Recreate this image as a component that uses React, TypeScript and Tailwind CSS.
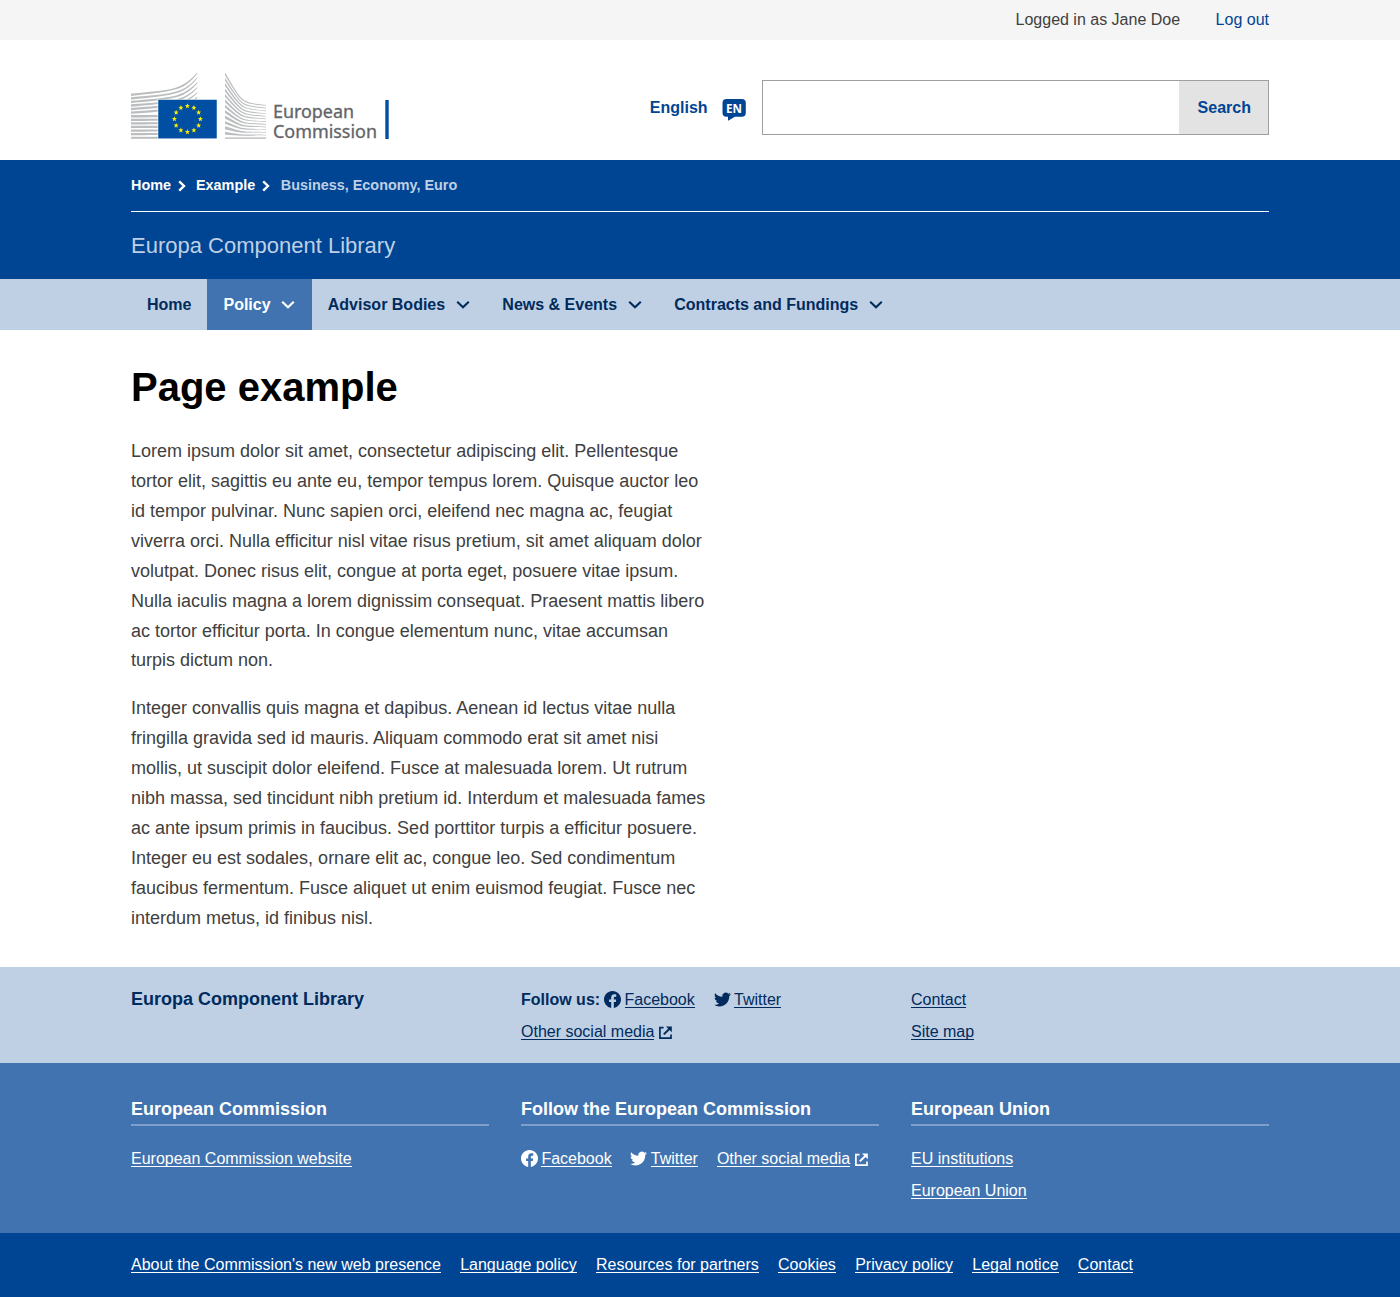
import React from "react";

const paragraphs = [
  [
    "Lorem ipsum dolor sit amet, consectetur adipiscing elit. Pellentesque",
    "tortor elit, sagittis eu ante eu, tempor tempus lorem. Quisque auctor leo",
    "id tempor pulvinar. Nunc sapien orci, eleifend nec magna ac, feugiat",
    "viverra orci. Nulla efficitur nisl vitae risus pretium, sit amet aliquam dolor",
    "volutpat. Donec risus elit, congue at porta eget, posuere vitae ipsum.",
    "Nulla iaculis magna a lorem dignissim consequat. Praesent mattis libero",
    "ac tortor efficitur porta. In congue elementum nunc, vitae accumsan",
    "turpis dictum non.",
  ],
  [
    "Integer convallis quis magna et dapibus. Aenean id lectus vitae nulla",
    "fringilla gravida sed id mauris. Aliquam commodo erat sit amet nisi",
    "mollis, ut suscipit dolor eleifend. Fusce at malesuada lorem. Ut rutrum",
    "nibh massa, sed tincidunt nibh pretium id. Interdum et malesuada fames",
    "ac ante ipsum primis in faucibus. Sed porttitor turpis a efficitur posuere.",
    "Integer eu est sodales, ornare elit ac, congue leo. Sed condimentum",
    "faucibus fermentum. Fusce aliquet ut enim euismod feugiat. Fusce nec",
    "interdum metus, id finibus nisl.",
  ],
];

const starPoints = (cx: number, cy: number, r: number) =>
  Array.from({ length: 10 }, (_, k) => {
    const radius = k % 2 ? r * 0.42 : r;
    const a = (Math.PI / 5) * k - Math.PI / 2;
    return `${(cx + radius * Math.cos(a)).toFixed(2)},${(cy + radius * Math.sin(a)).toFixed(2)}`;
  }).join(" ");

// Tapered strips: thick on the left edge, thin on the right edge.
const leftStrip = (i: number) => {
  const l = 21.6 + i * 3.58;
  const r = i < 6 ? 0.3 + i * 4.9 : l;
  const d = r - l;
  const t = 2.3;
  return `M0 ${l}C22 ${l + d * 0.1} 36 ${l + d * 0.14} 46 ${l + d * 0.3}S62 ${l + d * 0.76} 66.3 ${r}V${r + 1.1}C62 ${l + d * 0.76 + 1.6} 56 ${l + d * 0.46 + 2.2} 46 ${l + d * 0.3 + 1.9}S22 ${l + d * 0.1 + t} 0 ${l + t}Z`;
};

const rightStrip = (i: number) => {
  const l = 0.3 + i * 5.4;
  const r = 33 + i * 2.72;
  const d = r - l;
  return `M94 ${l}C101 ${l + d * 0.36} 108 ${l + d * 0.78} 114 ${l + d * 0.87}S128 ${r - 0.8} 135 ${r}V${r + 0.7}C128 ${r} 120 ${l + d * 0.96 + 1} 114 ${l + d * 0.87 + 1.2}C108 ${l + d * 0.78 + 1.7} 101 ${l + d * 0.36 + 2.6} 94 ${l + 2.9}Z`;
};

function Logo() {
  const rows = Array.from({ length: 12 }, (_, i) => i);
  return (
    <svg width="260" height="70" viewBox="0 0 260 70" className="block shrink-0" aria-label="European Commission">
      <g fill="#bbbdbf">
        {rows.map((i) => (
          <path key={i} d={leftStrip(i)} />
        ))}
        {rows.map((i) => (
          <path key={i} d={rightStrip(i)} />
        ))}
        <rect x="0" y="64.8" width="66.3" height="2" />
        <rect x="94" y="65.4" width="41" height="1.4" />
      </g>
      <rect x="27" y="27.5" width="59" height="39.3" fill="#004fa3" stroke="#fff" strokeWidth="0.5" />
      <g fill="#ffed00">
        {Array.from({ length: 12 }, (_, i) => {
          const a = (Math.PI / 6) * i;
          return <polygon key={i} points={starPoints(56.4 + 13 * Math.sin(a), 47 - 13 * Math.cos(a), 2.7)} />;
        })}
      </g>
      <g fill="#646569" stroke="#646569" strokeWidth="0.35" fontFamily='"Noto Sans", "Open Sans", sans-serif' fontSize="18.4">
        <text x="142" y="46.3" textLength="81" lengthAdjust="spacingAndGlyphs">European</text>
        <text x="142" y="66.3" textLength="104" lengthAdjust="spacingAndGlyphs">Commission</text>
      </g>
      <rect x="254.3" y="28" width="3.4" height="39" fill="#004fa3" />
    </svg>
  );
}

function ChevronDown() {
  return (
    <svg width="14" height="9" viewBox="0 0 14 9" fill="none" stroke="currentColor" strokeWidth="2.1" className="mr-[0.6px] ml-[10.6px]">
      <path d="M1.2 1.7L7 7.2L12.8 1.7" />
    </svg>
  );
}

function ChevronRight() {
  return (
    <svg width="8" height="12" viewBox="0 0 8 12" fill="none" stroke="currentColor" strokeWidth="2.4" className="mr-[9px] ml-[7px]">
      <path d="M1.2 1.3L6 6L1.2 10.7" />
    </svg>
  );
}

function FacebookIcon() {
  return (
    <svg width="17" height="17" viewBox="0 0 24 24" fill="currentColor" className="mr-[3.4px] shrink-0">
      <path d="M24 12.073c0-6.627-5.373-12-12-12s-12 5.373-12 12c0 5.99 4.388 10.954 10.125 11.854v-8.385H7.078v-3.47h3.047V9.43c0-3.007 1.792-4.669 4.533-4.669 1.312 0 2.686.235 2.686.235v2.953H15.83c-1.491 0-1.956.925-1.956 1.874v2.25h3.328l-.532 3.47h-2.796v8.385C19.612 23.027 24 18.062 24 12.073z" />
    </svg>
  );
}

function TwitterIcon() {
  return (
    <svg width="17" height="17" viewBox="0 0 24 24" fill="currentColor" className="mt-px mr-[3.5px] shrink-0">
      <path d="M23.953 4.57a10 10 0 01-2.825.775 4.958 4.958 0 002.163-2.723c-.951.555-2.005.959-3.127 1.184a4.92 4.92 0 00-8.384 4.482C7.69 8.095 4.067 6.13 1.64 3.162a4.822 4.822 0 00-.666 2.475c0 1.71.87 3.213 2.188 4.096a4.904 4.904 0 01-2.228-.616v.06a4.923 4.923 0 003.946 4.827 4.996 4.996 0 01-2.212.085 4.936 4.936 0 004.604 3.417 9.867 9.867 0 01-6.102 2.105c-.39 0-.779-.023-1.17-.067a13.995 13.995 0 007.557 2.209c9.053 0 13.998-7.496 13.998-13.985 0-.21 0-.42-.015-.63A9.935 9.935 0 0024 4.59z" />
    </svg>
  );
}

function ExternalIcon() {
  return (
    <svg width="13" height="13" viewBox="0 0 13 13" fill="none" stroke="currentColor" className="mt-[3px] ml-[5px] shrink-0">
      <path d="M4.6 1.6H0.9V12.1H12V8.6" strokeWidth="1.7" />
      <path d="M4.8 8.4L10.5 2.7" strokeWidth="2" />
      <path d="M7 0.5H12.8V6.3Z" fill="currentColor" stroke="none" />
    </svg>
  );
}

function Link({ children }: { children: React.ReactNode }) {
  return (
    <a href="#" className="h-[18px] border-b border-current leading-[20px] whitespace-nowrap">
      {children}
    </a>
  );
}

const wrap = "mx-auto w-[1138px]";

export default function App() {
  return (
    <div className="h-[1297px] w-[1400px] overflow-hidden bg-white text-base text-[#404040] [font-family:'Liberation_Sans',Arial,sans-serif]">
      <div className="h-10 bg-[#f5f5f5]">
        <div className={`${wrap} flex justify-end gap-[35.5px] leading-10`}>
          <span>Logged in as Jane Doe</span>
          <a href="#" className="text-[#004494]">Log out</a>
        </div>
      </div>

      <header className={`${wrap} flex h-[120px] justify-between`}>
        <div className="pt-8">
          <Logo />
        </div>
        <div className="flex pt-10 font-bold text-[#004494]">
          <span className="leading-[55px]">English</span>
          <svg width="24" height="23" viewBox="0 0 24 23" className="mt-[18px] mr-4 ml-[14.4px]">
            <path d="M4.5 1H19.8Q23.8 1 23.8 5V14.7Q23.8 18.7 19.8 18.7H13L6 22.7V18.7H4.5Q.5 18.7 .5 14.7V5Q.5 1 4.5 1Z" fill="#004494" />
            <text x="4" y="14.6" textLength="16" lengthAdjust="spacingAndGlyphs" fill="#fff" fontSize="12.6" fontWeight="700" fontFamily='"Open Sans", sans-serif'>EN</text>
          </svg>
          <div className="flex h-[55px] w-[507px] border border-[#9f9f9f]">
            <input className="min-w-0 flex-1" aria-label="Search" />
            <button className="w-[89px] bg-[#e3e3e3] pl-[1.5px]">Search</button>
          </div>
        </div>
      </header>

      <div className="h-[119px] bg-[#004494] text-[#bfd0e4]">
        <div className={wrap}>
          <nav className="flex h-[52px] items-center border-b border-white text-[14.4px] font-bold">
            <span className="text-white">Home</span>
            <span className="text-white"><ChevronRight /></span>
            <span className="ml-[1px] text-white">Example</span>
            <span className="text-white"><ChevronRight /></span>
            <span className="ml-[1.6px]">Business, Economy, Euro</span>
          </nav>
          <div className="text-[22px] leading-[67px]">Europa Component Library</div>
        </div>
      </div>

      <nav className="h-[51px] bg-[#bfd0e4] font-bold text-[#002b5c]">
        <div className={`${wrap} flex h-full`}>
          <a href="#" className="flex items-center px-4">Home</a>
          <a href="#" className="flex items-center bg-[#4073af] px-4 text-white">Policy<ChevronDown /></a>
          <a href="#" className="flex items-center px-4">Advisor Bodies<ChevronDown /></a>
          <a href="#" className="flex items-center px-4">News &amp; Events<ChevronDown /></a>
          <a href="#" className="flex items-center px-4">Contracts and Fundings<ChevronDown /></a>
        </div>
      </nav>

      <main className={`${wrap} h-[637px] pt-8`}>
        <h1 className="text-[40px] leading-[50px] font-bold text-black">Page example</h1>
        {paragraphs.map((lines, p) => (
          <p key={p} className="mt-[18px] text-[18px] leading-[29.92px] first-of-type:mt-[25px]">
            {lines.map((line) => (
              <span key={line} className="block whitespace-nowrap">{line}</span>
            ))}
          </p>
        ))}
      </main>

      <footer>
        <section className="h-24 bg-[#bfd0e4] text-[#002b5c]">
          <div className={`${wrap} grid grid-cols-3 gap-8 pt-4`}>
            <div className="text-[18px] leading-8 font-bold">Europa Component Library</div>
            <div>
              <div className="flex h-8 items-center">
                <b className="mt-px mr-1">Follow us:</b>
                <FacebookIcon /><Link>Facebook</Link>
                <span className="w-[18.8px]" />
                <TwitterIcon /><Link>Twitter</Link>
              </div>
              <div className="flex h-8 items-center"><Link>Other social media</Link><ExternalIcon /></div>
            </div>
            <div>
              <div className="flex h-8 items-center"><Link>Contact</Link></div>
              <div className="flex h-8 items-center"><Link>Site map</Link></div>
            </div>
          </div>
        </section>

        <section className="h-[170px] bg-[#4073af] text-white">
          <div className={`${wrap} grid grid-cols-3 gap-8 pt-8`}>
            <div>
              <h2 className="mb-4 h-[31px] border-b-2 border-[#7f9fcb] text-[18px] leading-[28px] font-bold">European Commission</h2>
              <div className="flex h-8 items-center"><Link>European Commission website</Link></div>
            </div>
            <div>
              <h2 className="mb-4 h-[31px] border-b-2 border-[#7f9fcb] text-[18px] leading-[28px] font-bold">Follow the European Commission</h2>
              <div className="flex h-8 items-center">
                <FacebookIcon /><Link>Facebook</Link>
                <span className="w-[18.6px]" />
                <TwitterIcon /><Link>Twitter</Link>
                <span className="w-[19px]" />
                <Link>Other social media</Link><ExternalIcon />
              </div>
            </div>
            <div>
              <h2 className="mb-4 h-[31px] border-b-2 border-[#7f9fcb] text-[18px] leading-[28px] font-bold">European Union</h2>
              <div className="flex h-8 items-center"><Link>EU institutions</Link></div>
              <div className="flex h-8 items-center"><Link>European Union</Link></div>
            </div>
          </div>
        </section>

        <section className="h-16 bg-[#004494] text-white">
          <div className={`${wrap} flex h-[62px] items-center gap-[19.3px]`}>
            <Link>About the Commission's new web presence</Link>
            <Link>Language policy</Link>
            <Link>Resources for partners</Link>
            <Link>Cookies</Link>
            <Link>Privacy policy</Link>
            <Link>Legal notice</Link>
            <Link>Contact</Link>
          </div>
        </section>
      </footer>
    </div>
  );
}
